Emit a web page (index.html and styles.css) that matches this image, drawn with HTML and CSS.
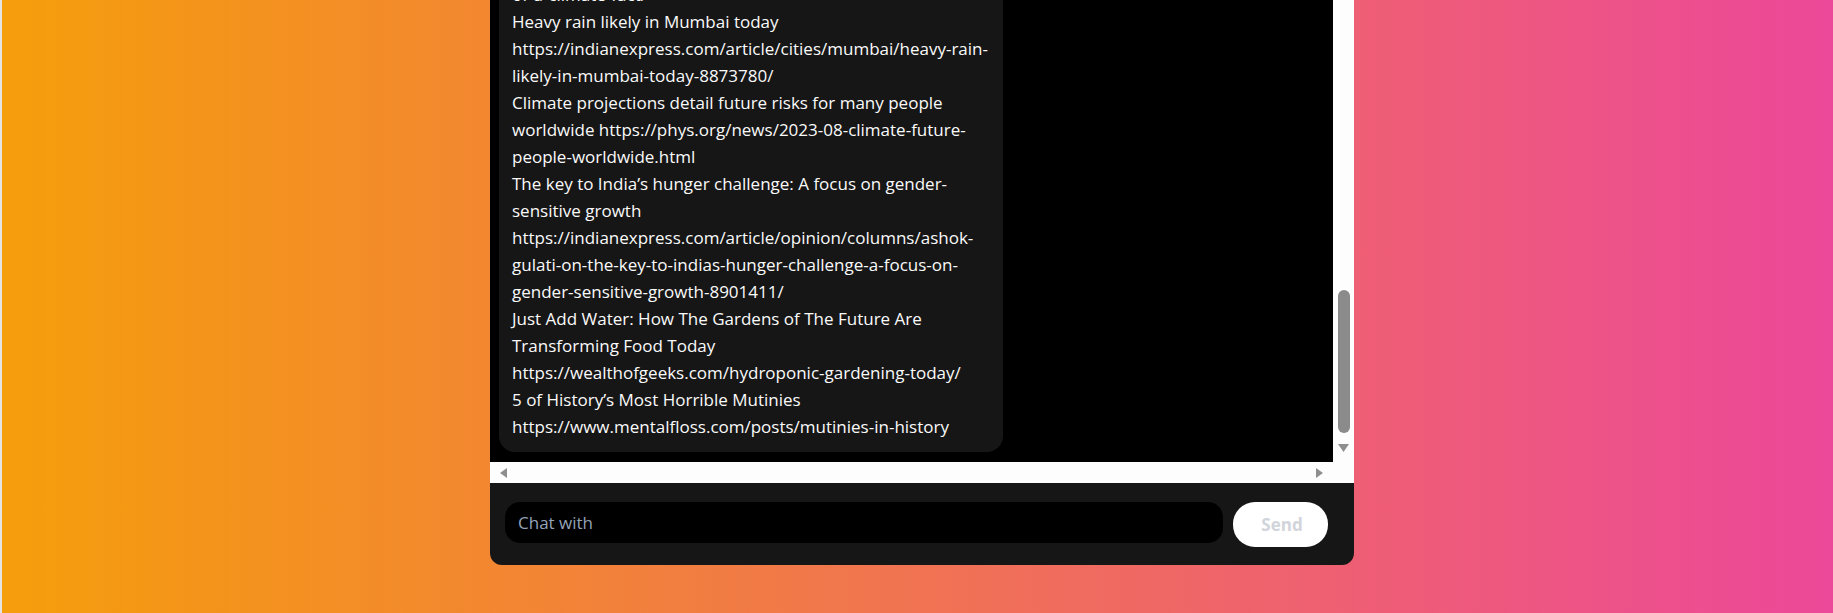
FILE: index.html
```html
<!DOCTYPE html>
<html lang="en">
<head>
<meta charset="utf-8">
<title>Chat</title>
<link rel="stylesheet" href="styles.css">
</head>
<body>
<div class="stage">
  <section class="chat">
    <div class="log-frame">
      <div class="log">
        <div class="bubble">of-a-climate-fact/<br>Heavy rain likely in Mumbai today<br>https://indianexpress.com/article/cities/mumbai/heavy-rain-<br>likely-in-mumbai-today-8873780/<br>Climate projections detail future risks for many people<br>worldwide https://phys.org/news/2023-08-climate-future-<br>people-worldwide.html<br>The key to India’s hunger challenge: A focus on gender-<br>sensitive growth<br>https://indianexpress.com/article/opinion/columns/ashok-<br>gulati-on-the-key-to-indias-hunger-challenge-a-focus-on-<br>gender-sensitive-growth-8901411/<br>Just Add Water: How The Gardens of The Future Are<br>Transforming Food Today<br>https://wealthofgeeks.com/hydroponic-gardening-today/<br>5 of History’s Most Horrible Mutinies<br>https://www.mentalfloss.com/posts/mutinies-in-history</div>
      </div>
      <div class="vbar">
        <div class="vthumb"></div>
        <svg class="arrow" width="11" height="10" viewBox="0 0 11 10"><polygon points="0,1 11,1 5.5,9" /></svg>
      </div>
    </div>
    <div class="hbar">
      <svg class="arrow" width="9" height="10" viewBox="0 0 9 10"><polygon points="8,0 8,10 1,5" /></svg>
      <svg class="arrow" width="9" height="10" viewBox="0 0 9 10"><polygon points="1,0 1,10 8,5" /></svg>
    </div>
    <form class="composer">
      <input class="composer-input" type="text" placeholder="Chat with">
      <button class="composer-send" type="button">Send</button>
    </form>
  </section>
</div>
</body>
</html>
```

FILE: styles.css
```css
html, body {
  margin: 0;
  height: 100%;
}

body {
  box-sizing: border-box;
  border-left: 2px solid #e4e4e4;
  background: linear-gradient(to right, #f59e0b, #ec4899);
  overflow: hidden;
  font-family: "Open Sans", "Noto Sans", "Liberation Sans", sans-serif;
}

.stage {
  padding-left: 488px;
}

.chat {
  width: 864px;
}

.log-frame {
  display: flex;
  height: 462px;
}

.log {
  flex: 1;
  background: #000;
  overflow: hidden;
  display: flex;
  flex-direction: column;
  justify-content: flex-end;
  padding: 0 0 10px 9px;
}

.bubble {
  flex-shrink: 0;
  width: 504px;
  box-sizing: border-box;
  padding: 12px 13px;
  background: #161616;
  border-radius: 16px;
  color: #fafafa;
  font-size: 17px;
  line-height: 27px;
}

.vbar {
  width: 21px;
  box-sizing: border-box;
  background: #fdfdfd;
  display: flex;
  flex-direction: column;
  align-items: center;
  justify-content: flex-end;
  padding-bottom: 9px;
}

.vthumb {
  width: 12px;
  height: 143px;
  border-radius: 6px;
  background: #8b8b8b;
  margin-bottom: 10px;
}

.arrow {
  display: block;
  fill: #8e8e8e;
}

.hbar {
  height: 21px;
  background: #fdfdfd;
  display: flex;
  align-items: center;
  justify-content: space-between;
  padding: 0 30px 0 9px;
}

.composer {
  margin: 0;
  background: #161616;
  border-radius: 0 0 12px 12px;
  display: flex;
  align-items: flex-start;
  gap: 10px;
  padding: 19px 26px 18px 15px;
}

.composer-input {
  flex: 1;
  min-width: 0;
  height: 41px;
  box-sizing: border-box;
  background: #000;
  border: none;
  border-radius: 15px;
  padding: 0 13px;
  color: #fff;
  font-family: inherit;
  font-size: 17px;
  outline: none;
}

.composer-input::placeholder {
  color: #94a3b8;
}

.composer-send {
  width: 95px;
  height: 45px;
  border: none;
  border-radius: 22px;
  background: #fff;
  color: #d1d5db;
  font-family: inherit;
  font-weight: 700;
  font-size: 17px;
  padding: 0 0 0 3px;
}
```
